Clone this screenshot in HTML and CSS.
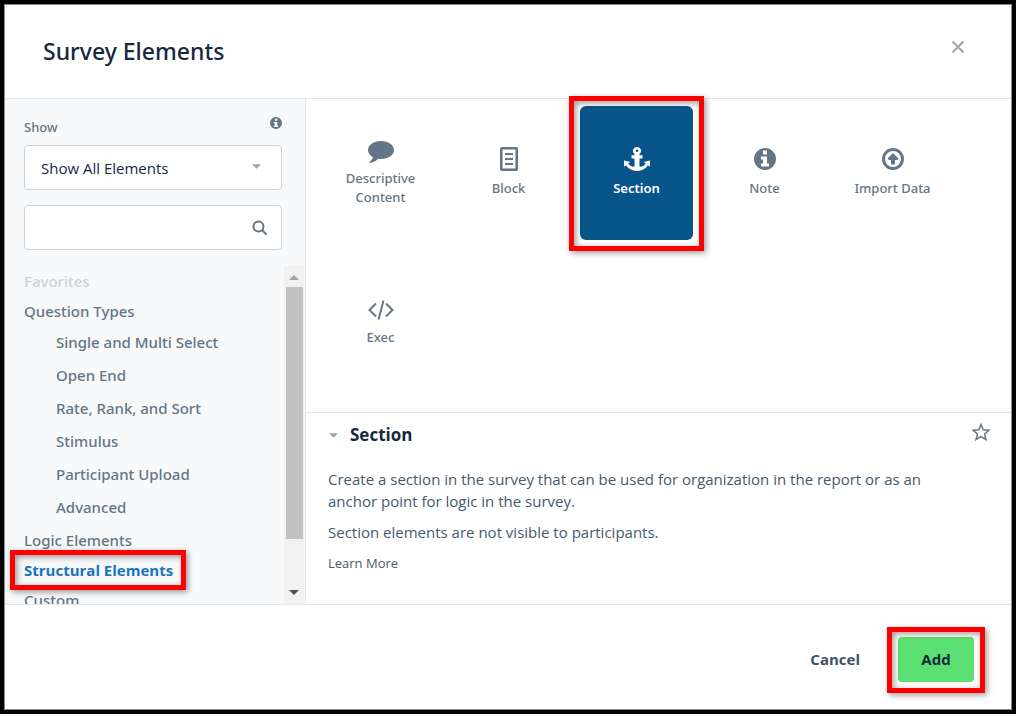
FILE: index.html
```html
<!DOCTYPE html>
<html lang="en">
<head>
    <meta charset="UTF-8">
    <meta name="viewport" content="width=device-width, initial-scale=1.0">
    <title>Survey Elements</title>
    <link rel="stylesheet" href="styles.css">
</head>
<body>
    <div class="modal" role="dialog" aria-labelledby="modalTitle">
        <header class="modal-header">
            <h1 id="modalTitle">Survey Elements</h1>
            <button type="button" class="icon-button" aria-label="Close">
                <svg class="close-icon" viewBox="0 0 14 14" width="14" height="14"><path d="M1.500 1.500l11 11M12.500 1.500l-11 11"/></svg>
            </button>
        </header>

        <div class="modal-body">
            <!-- Filters and category list -->
            <aside class="sidebar">
                <div class="filters">
                    <div class="label-row">
                        <label for="show">Show</label>
                        <svg class="info-icon" viewBox="0 0 22 22" width="12" height="12"><path fill-rule="evenodd" d="M11 0a11 11 0 1 0 0 22a11 11 0 1 0 0-22zM9 3h4.500v4H9zM7 9h6.500v6.500H15v3H7v-3h2v-3.500H7z"/></svg>
                    </div>
                    <div class="field">
                        <select id="show">
                            <option>Show All Elements</option>
                        </select>
                        <svg class="caret" viewBox="0 0 10 5" width="9" height="5"><path d="M0 0h10L5 5z"/></svg>
                    </div>
                    <div class="field">
                        <input type="text" id="search" aria-label="Search elements">
                        <button type="button" class="search-button" aria-label="Search">
                            <svg class="search-icon" viewBox="0 0 16 16" width="16" height="16"><circle cx="6.500" cy="6.500" r="5"/><path d="M10.200 10.200l4.500 4.500"/></svg>
                        </button>
                    </div>
                </div>

                <div class="category-area">
                    <ul class="categories">
                        <li class="disabled">Favorites</li>
                        <li>
                            <a href="#">Question Types</a>
                            <ul class="subcategories">
                                <li><a href="#">Single and Multi Select</a></li>
                                <li><a href="#">Open End</a></li>
                                <li><a href="#">Rate, Rank, and Sort</a></li>
                                <li><a href="#">Stimulus</a></li>
                                <li><a href="#">Participant Upload</a></li>
                                <li><a href="#">Advanced</a></li>
                            </ul>
                        </li>
                        <li><a href="#">Logic Elements</a></li>
                        <li><a href="#" class="current highlight">Structural Elements</a></li>
                        <li><a href="#">Custom</a></li>
                    </ul>
                    <div class="scrollbar" aria-hidden="true">
                        <svg class="scroll-up" viewBox="0 0 10 5" width="10" height="5"><path d="M0 5h10L5 0z"/></svg>
                        <div class="scroll-track"><div class="scroll-thumb"></div></div>
                        <svg class="scroll-down" viewBox="0 0 10 5" width="10" height="5"><path d="M0 0h10L5 5z"/></svg>
                    </div>
                </div>
            </aside>

            <main class="content">
                <div class="tiles">
                    <button type="button" class="tile">
                        <svg viewBox="0 -4 26 24" width="26" height="24" overflow="visible"><path d="M13 0C5.800 0 0 4 0 9c0 2.900 1.900 5.400 4.800 7.100C4.500 18 3.300 19.700 1.800 21c-.5.5-.3 1 .4.900 3.200-.5 6-2 8-4.100 1 .2 1.800.2 2.800.2 7.200 0 13-4 13-9S20.200 0 13 0z"/></svg>
                        <span>Descriptive Content</span>
                    </button>
                    <button type="button" class="tile">
                        <svg viewBox="0 0 18 24" width="18" height="24"><path fill-rule="evenodd" d="M2 0h14a2 2 0 0 1 2 2v20a2 2 0 0 1-2 2H2a2 2 0 0 1-2-2V2a2 2 0 0 1 2-2zM2.500 2.500v19h13v-19zM5 6h8v2H5zM5 11h8v2H5zM5 16h8v2H5z"/></svg>
                        <span>Block</span>
                    </button>
                    <button type="button" class="tile selected highlight">
                        <svg viewBox="0 0 26 26" width="26" height="24" preserveAspectRatio="none"><path fill-rule="evenodd" d="M13 0a4 4 0 0 0-2.500 7.200V9H7.500v3.500h3v9c-3.200-.4-5.500-2-6.300-4l2.300-1.300L0 14.500v7l2-1.800C4.200 23.200 8.300 26 13 26s8.800-2.800 11-6.300l2 1.800v-7l-6.500 1.700 2.300 1.300c-.8 2-3.100 3.600-6.300 4v-9h3V9h-3V7.200A4 4 0 0 0 13 0zm0 2.700a1.300 1.300 0 1 1 0 2.600 1.300 1.300 0 0 1 0-2.600z"/></svg>
                        <span>Section</span>
                    </button>
                    <button type="button" class="tile">
                        <svg viewBox="0 0 22 22" width="22" height="24"><path fill-rule="evenodd" d="M11 0a11 11 0 1 0 0 22a11 11 0 1 0 0-22zM9 2.500h4v4H9zM7 8.500h6v7h2v3H7v-3h2v-4H7z"/></svg>
                        <span>Note</span>
                    </button>
                    <button type="button" class="tile">
                        <svg viewBox="0 0 22 22" width="22" height="24"><path fill-rule="evenodd" d="M11 0a11 11 0 1 0 0 22a11 11 0 1 0 0-22zM11 3a8 8 0 1 1 0 16a8 8 0 1 1 0-16zM11 5l5.500 5.500-1.500 1.500H13v4.500H9V12H7l-1.500-1.500z"/></svg>
                        <span>Import Data</span>
                    </button>
                    <button type="button" class="tile">
                        <svg class="code-icon" viewBox="0 0 26 20" width="26" height="24" preserveAspectRatio="xMidYMax"><path d="M8 3.500L1.500 10 8 16.500M18 3.500l6.500 6.500-6.500 6.500M15.500.5l-5 19"/></svg>
                        <span>Exec</span>
                    </button>
                </div>

                <!-- Description of the selected element -->
                <section class="details">
                    <div class="details-header">
                        <button type="button" class="toggle">
                            <svg class="caret" viewBox="0 0 10 5" width="9" height="5"><path d="M0 0h10L5 5z"/></svg>
                            <span>Section</span>
                        </button>
                        <button type="button" class="icon-button" aria-label="Add to favorites">
                            <svg class="star-icon" viewBox="0 0 18 18" width="18" height="18"><path d="M9 1.500l2.200 5.200 5.800.5-4.400 3.700 1.400 5.600L9 13.500l-5 3 1.400-5.600L1 7.200l5.800-.5z"/></svg>
                        </button>
                    </div>
                    <p>Create a section in the survey that can be used for organization in the report or as an anchor point for logic in the survey.</p>
                    <p>Section elements are not visible to participants.</p>
                    <a href="#" class="learn-more">Learn More</a>
                </section>
            </main>
        </div>

        <footer class="modal-footer">
            <button type="button" class="cancel">Cancel</button>
            <button type="button" class="add highlight">Add</button>
        </footer>
    </div>
</body>
</html>
```
FILE: styles.css
```css
* {
    box-sizing: border-box;
    margin: 0;
    padding: 0;
    font-family: "Open Sans", "Noto Sans", sans-serif;
}

body {
    background: #000;
    padding: 4px;
    height: 100vh;
}

svg {
    display: block;
    flex: none;
    fill: #637586;
}

button {
    background: none;
    border: none;
    cursor: pointer;
}

a {
    color: inherit;
    text-decoration: none;
}

ul {
    list-style: none;
}

/* Noto Sans has the medium weight */
h1,
.label-row label,
.categories a,
.categories .disabled,
.tile span {
    font-family: "Noto Sans", "Open Sans", sans-serif;
    font-weight: 500;
}

.modal {
    display: flex;
    flex-direction: column;
    height: 100%;
    background: #fff;
    border: 1px solid #8c8c8c;
}

/* Header */
.modal-header {
    display: flex;
    align-items: center;
    justify-content: space-between;
    height: 94px;
    padding: 0 46px 2px 38px;
    border-bottom: 1px solid #e3e6e9;
}

.modal-header h1 {
    font-size: 23px;
    color: #15293f;
}

.modal-header .icon-button {
    margin-bottom: 8px;
}

.icon-button {
    display: flex;
}

.close-icon {
    fill: none;
    stroke: #9aa7b3;
    stroke-width: 2;
}

.modal-body {
    display: flex;
    flex: 1;
    min-height: 0;
}

/* Sidebar */
.sidebar {
    display: flex;
    flex-direction: column;
    width: 301px;
    background: #f7f9fb;
    border-right: 1px solid #e3e6e9;
}

.filters {
    display: flex;
    flex-direction: column;
    gap: 15px;
    padding: 16px 23px 16px 19px;
}

.label-row {
    display: flex;
    justify-content: space-between;
    height: 24px;
    margin-bottom: -9px;
    font-size: 13px;
    color: #637586;
}

.label-row .info-icon {
    margin-top: 2px;
}

.label-row label {
    line-height: 24px;
}

.field {
    position: relative;
}

.field select,
.field input {
    display: block;
    width: 100%;
    height: 45px;
    padding: 0 16px;
    appearance: none;
    background: #fff;
    border: 1px solid #cbd2d9;
    border-radius: 4px;
    font-size: 15px;
    color: #15293f;
}

.caret {
    fill: #9aa7b3;
}

.field .caret {
    position: absolute;
    top: 19px;
    right: 21px;
}

.search-button {
    position: absolute;
    top: 15px;
    right: 14px;
}

.search-icon {
    fill: none;
    stroke: #637586;
    stroke-width: 2;
}

.category-area {
    display: flex;
    flex: 1;
    min-height: 0;
    padding-right: 1px;
}

.categories {
    flex: 1;
    overflow: hidden;
    padding-left: 19px;
    font-size: 15px;
    line-height: 30px;
    color: #637586;
}

.categories a {
    display: inline-block;
    vertical-align: top;
}

.categories .disabled {
    color: #cbd2d9;
}

.subcategories {
    margin-bottom: 1px;
    padding-left: 32px;
    line-height: 33px;
}

.categories .current {
    font-family: "Open Sans", "Noto Sans", sans-serif;
    font-weight: 700;
    color: #1b74b8;
}

.scrollbar {
    display: flex;
    flex-direction: column;
    align-items: center;
    width: 20px;
    padding: 9px 0;
    background: #f1f1f1;
}

.scroll-up {
    fill: #a3a3a3;
}

.scroll-down {
    fill: #505050;
}

.scroll-track {
    flex: 1;
    width: 17px;
    margin: 7px 0;
}

.scroll-thumb {
    height: 85%;
    background: #c1c1c1;
}

/* Element tiles */
.content {
    display: flex;
    flex: 1;
    flex-direction: column;
    min-width: 0;
}

.tiles {
    display: flex;
    flex: 1;
    flex-wrap: wrap;
    align-content: flex-start;
    gap: 15px;
    padding: 7px 18px;
}

.tile {
    display: flex;
    flex-direction: column;
    align-items: center;
    justify-content: center;
    gap: 8px;
    width: 113px;
    height: 134px;
    padding: 0 14px 2px;
    border-radius: 6px;
    font-size: 13px;
    line-height: 19px;
    color: #637586;
}

.tile.selected {
    background: #08558c;
    color: #fff;
}

.tile.selected span {
    font-weight: 600;
}

.tile.selected svg {
    fill: #fff;
}

.tile .code-icon {
    fill: none;
    stroke: #637586;
    stroke-width: 2;
}

/* Red frame around the highlighted steps */
.highlight {
    position: relative;
}

.highlight::after {
    content: "";
    position: absolute;
    inset: -10px -11px -11px;
    border: 5px solid #f00;
    box-shadow: 2px 2px 6px rgba(0, 0, 0, 0.4), inset 2px 2px 6px rgba(0, 0, 0, 0.4);
    pointer-events: none;
}

.current.highlight::after {
    inset: -5px -13px -5px -14px;
}

/* Details */
.details {
    display: flex;
    flex-direction: column;
    align-items: flex-start;
    gap: 9px;
    height: 192px;
    padding: 10px 21px 10px 22px;
    border-top: 1px solid #e3e6e9;
    font-size: 15px;
    line-height: 22px;
    color: #455a6e;
}

.details-header {
    display: flex;
    align-items: flex-start;
    align-self: stretch;
    justify-content: space-between;
    margin-bottom: 12px;
}

.toggle {
    display: flex;
    align-items: center;
    gap: 12px;
    padding-left: 1px;
    font-size: 17px;
    font-weight: 700;
    line-height: 24px;
    color: #15293f;
}

.details p {
    max-width: 620px;
}

.star-icon {
    fill: none;
    stroke: #637586;
    stroke-width: 1.5;
}

.learn-more {
    font-size: 13px;
}

/* Footer */
.modal-footer {
    display: flex;
    align-items: center;
    justify-content: flex-end;
    gap: 38px;
    height: 105px;
    padding: 5px 37px 0 0;
    border-top: 1px solid #e3e6e9;
}

.modal-footer button {
    padding-bottom: 2px;
    font-size: 15px;
    font-weight: 700;
    color: #3d5266;
}

.modal-footer .add {
    width: 76px;
    height: 45px;
    background: #5be171;
    border-radius: 4px;
    color: #15293f;
}
```
